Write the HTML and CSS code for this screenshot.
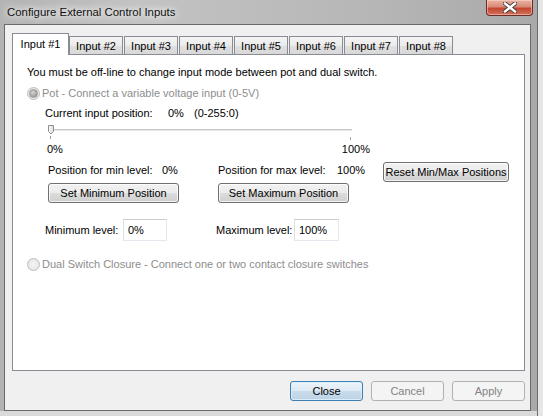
FILE: index.html
```html
<!DOCTYPE html>
<html lang="en">
<head>
<meta charset="utf-8">
<title>Configure External Control Inputs</title>
<link rel="stylesheet" href="styles.css">
</head>
<body>
<div class="window">
  <div class="titlebar">
    <span class="title">Configure External Control Inputs</span>
    <button class="close-btn" aria-label="Close">
      <svg width="14" height="11" viewBox="0 0 14 11">
        <path d="M2 1.5 L12 9.5 M12 1.5 L2 9.5" stroke="#3a3a3a" stroke-width="4.2" stroke-linecap="square"/>
        <path d="M2 1.5 L12 9.5 M12 1.5 L2 9.5" stroke="#ffffff" stroke-width="2.4" stroke-linecap="square"/>
      </svg>
    </button>
  </div>

  <div class="client">
    <div class="tabs">
      <div class="tab active">Input #1</div>
      <div class="tab">Input #2</div>
      <div class="tab">Input #3</div>
      <div class="tab">Input #4</div>
      <div class="tab">Input #5</div>
      <div class="tab">Input #6</div>
      <div class="tab">Input #7</div>
      <div class="tab">Input #8</div>
    </div>

    <div class="panel">
      <p class="note">You must be off-line to change input mode between pot and dual switch.</p>

      <label class="radio disabled first-radio"><span class="radio-mark checked"></span>Pot - Connect a variable voltage input (0-5V)</label>

      <div class="pot">
        <div class="position">
          <span class="position-label">Current input position:</span>
          <span class="position-pct">0%</span>
          <span>(0-255:0)</span>
        </div>

        <div class="slider">
          <div class="track"></div>
          <svg class="thumb" width="7" height="10" viewBox="0 0 7 10">
            <defs>
              <linearGradient id="thumbFill" x1="0" y1="0" x2="1" y2="0">
                <stop offset="0" stop-color="#fdfdfd"/>
                <stop offset="1" stop-color="#dcdcdc"/>
              </linearGradient>
            </defs>
            <path d="M0.5 0.5 H5.5 V6.5 L3 9 L0.5 6.5 Z" fill="url(#thumbFill)" stroke="#8f8f8f"/>
          </svg>
          <span class="tick tick-min"></span>
          <span class="tick tick-max"></span>
        </div>

        <div class="scale">
          <span>0%</span>
          <span>100%</span>
        </div>

        <div class="levels">
          <div class="level-line">
            <span class="level-label">Position for min level:</span><span>0%</span>
          </div>
          <div class="level-line">
            <span class="level-label wide">Position for max level:</span><span>100%</span>
          </div>
          <button class="btn reset-btn">Reset Min/Max Positions</button>
          <button class="btn set-btn">Set Minimum Position</button>
          <button class="btn set-btn">Set Maximum Position</button>
        </div>

        <div class="limits">
          <div class="limit">
            <span class="limit-label">Minimum level:</span>
            <span class="field">0%</span>
          </div>
          <div class="limit">
            <span class="limit-label">Maximum level:</span>
            <span class="field field-wide">100%</span>
          </div>
        </div>
      </div>

      <label class="radio disabled"><span class="radio-mark"></span>Dual Switch Closure - Connect one or two contact closure switches</label>
    </div>

    <div class="footer">
      <button class="btn dlg-btn default">Close</button>
      <button class="btn dlg-btn" disabled>Cancel</button>
      <button class="btn dlg-btn" disabled>Apply</button>
    </div>
  </div>
</div>
</body>
</html>
```

FILE: styles.css
```css
* {
  box-sizing: border-box;
}

html, body {
  margin: 0;
  padding: 0;
}

body {
  width: 543px;
  height: 416px;
  overflow: hidden;
  font-family: "Liberation Sans", Arial, sans-serif;
  font-size: 11px;
  color: #000;
  background: #e6e6e6;
  white-space: nowrap;
}

/* Aero-style window frame; the lower edge fades into a pale strip */
.window {
  width: 538px;
  height: 416px;
  display: flex;
  flex-direction: column;
  border-right: 1px solid #6e6e6e;
  background:
    linear-gradient(to bottom, transparent 411px, #dadada 411px),
    linear-gradient(90deg, #b3b3b3 0%, #c3c3c3 25%, #b6b6b6 70%, #a9a9a9 100%);
}

.titlebar {
  height: 24px;
  flex: none;
  display: flex;
  align-items: flex-start;
  justify-content: space-between;
  padding-left: 7px;
}

.title {
  margin-top: 5px;
  font-size: 11.4px;
  line-height: 14px;
  color: #111;
  text-shadow: 0 0 6px #ffffff, 0 0 10px rgba(255, 255, 255, 0.9), 0 0 14px rgba(255, 255, 255, 0.7);
}

.close-btn {
  width: 47px;
  height: 16px;
  margin-right: 4px;
  padding: 0;
  border: 1px solid #6d2d26;
  border-top: none;
  border-radius: 0 0 4px 4px;
  background: linear-gradient(#eab3a4 0%, #d88a78 45%, #c5452f 55%, #d0725c 100%);
  box-shadow: inset 0 0 0 1px rgba(255, 220, 210, 0.5);
  display: flex;
  align-items: center;
  justify-content: center;
}

.client {
  flex: 1;
  margin: 0 6px 5px 4px;
  border: 1px solid #6a6a6a;
  background: #f0f0f0;
  padding: 8px 5px 0 7px;
  display: flex;
  flex-direction: column;
}

/* Tab strip */
.tabs {
  height: 22px;
  display: flex;
  align-items: flex-start;
  position: relative;
  z-index: 1;
  margin-bottom: -1px;
}

.tab {
  width: 54px;
  height: 18px;
  margin-top: 3px;
  margin-left: 1px;
  border: 1px solid #898c95;
  border-bottom: none;
  background: linear-gradient(#f4f4f4, #ebebeb 50%, #e0e0e0 51%, #d8d8d8);
  display: flex;
  align-items: center;
  justify-content: center;
  line-height: 15px;
  padding-top: 1px;
}

.tab.active {
  width: 57px;
  height: 22px;
  margin-top: 0;
  margin-left: 0;
  margin-right: -1px;
  background: #fff;
  padding-top: 0;
}

.panel {
  height: 317px;
  flex: none;
  border: 1px solid #898c95;
  background: #fff;
  padding: 10px 0 0 14px;
}

.note {
  margin: 0;
  line-height: 15px;
}

.radio {
  display: flex;
  align-items: center;
  line-height: 15px;
}

.radio.disabled {
  color: #8d8d8d;
}

.first-radio {
  margin-top: 6px;
}

.radio-mark {
  width: 13px;
  height: 13px;
  margin-right: 2px;
  border-radius: 50%;
  border: 1px solid #bdbdbd;
  background: radial-gradient(circle at 50% 50%, #f6f6f6 0%, #e9e9e9 60%, #dedede 100%);
  display: flex;
  align-items: center;
  justify-content: center;
}

.radio-mark.checked::after {
  content: "";
  width: 7px;
  height: 7px;
  border-radius: 50%;
  background: radial-gradient(circle at 40% 35%, #d6d6d6 0%, #a9a9a9 55%, #8e8e8e 100%);
  border: 1px solid #9a9a9a;
}

/* Pot settings block */
.pot {
  padding-left: 18px;
}

.position {
  display: flex;
  margin-top: 5px;
  line-height: 15px;
}

.position-label {
  width: 123px;
}

.position-pct {
  width: 26px;
}

.slider {
  position: relative;
  width: 304px;
  height: 21px;
  margin-left: 3px;
}

.track {
  position: absolute;
  left: 0;
  right: 0;
  top: 8px;
  height: 2px;
  background: #c9c9c9;
  border-bottom: 1px solid #e7e7e7;
}

.thumb {
  position: absolute;
  left: 0;
  top: 4px;
}

.tick {
  position: absolute;
  width: 1px;
  height: 3px;
  background: #a0a0a0;
}

.tick-min {
  left: 2px;
  top: 15px;
}

.tick-max {
  left: 302px;
  top: 16px;
}

.scale {
  width: 323px;
  margin-left: 2px;
  display: flex;
  justify-content: space-between;
  line-height: 15px;
}

.levels {
  margin-top: 5px;
  margin-left: 3px;
  display: grid;
  grid-template-columns: 170px 165px 126px;
  grid-template-rows: 20px 20px;
  row-gap: 1px;
}

.level-line {
  display: flex;
  line-height: 15px;
  padding-top: 1px;
}

.level-label {
  width: 114px;
}

.level-label.wide {
  width: 119px;
}

.btn {
  font-family: inherit;
  font-size: inherit;
  color: #000;
  height: 20px;
  padding: 0;
  border: 1px solid #707070;
  border-radius: 3px;
  background: linear-gradient(#f2f2f2 0%, #ebebeb 50%, #dddddd 51%, #cfcfcf 100%);
  box-shadow: inset 0 0 0 1px rgba(255, 255, 255, 0.75);
  white-space: nowrap;
}

.reset-btn {
  width: 126px;
}

.set-btn {
  width: 131px;
}

.limits {
  margin-top: 16px;
  display: flex;
  gap: 49px;
}

.limit {
  display: flex;
  align-items: center;
}

.limit-label {
  width: 78px;
}

.field {
  width: 44px;
  height: 22px;
  border: 1px solid #e3e9ef;
  border-top-color: #c9ced4;
  border-left-color: #dbdfe6;
  background: #fff;
  padding-left: 4px;
  line-height: 20px;
}

.field-wide {
  width: 45px;
}

.pot + .radio {
  margin-top: 16px;
}

/* Dialog buttons */
.footer {
  margin-top: 10px;
  display: flex;
  justify-content: flex-end;
  gap: 8px;
}

.dlg-btn {
  width: 73px;
}

.btn.default {
  border-color: #3c7fb1;
  background: linear-gradient(#ecf4fa 0%, #dde9f3 50%, #c9dceb 51%, #bcd3e5 100%);
  box-shadow: inset 0 0 0 1px rgba(220, 240, 255, 0.9);
}

.btn:disabled {
  color: #838383;
  border-color: #adb2b5;
  background: #f4f4f4;
  box-shadow: none;
}
```
